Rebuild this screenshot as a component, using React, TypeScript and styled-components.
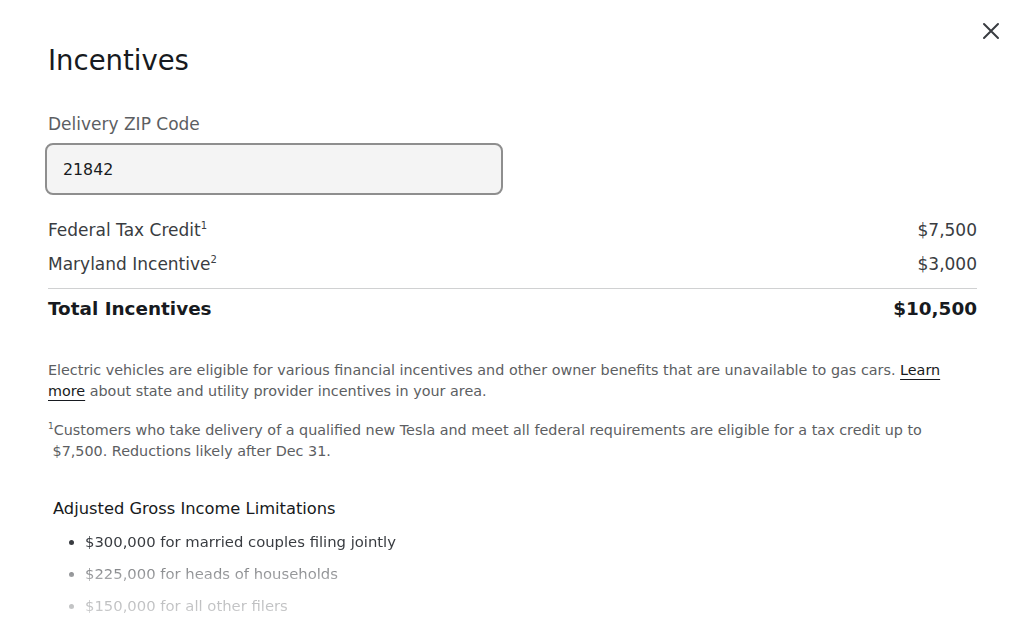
import React from 'react';
import styled, { createGlobalStyle } from 'styled-components';

const GlobalStyle = createGlobalStyle`
  html, body {
    margin: 0;
    padding: 0;
    background: #ffffff;
  }
  body {
    font-family: "DejaVu Sans", "Liberation Sans", sans-serif;
    color: #393c41;
    -webkit-font-smoothing: antialiased;
  }
`;

const Modal = styled.div`
  position: relative;
  width: 1024px;
  height: 634px;
  overflow: hidden;
  box-sizing: border-box;
  padding: 40px 47px 0 48px;
`;

const CloseButton = styled.button`
  position: absolute;
  top: 20px;
  right: 22px;
  width: 22px;
  height: 22px;
  padding: 0;
  border: none;
  background: none;
  display: flex;
  align-items: center;
  justify-content: center;
  cursor: pointer;
`;

const Title = styled.h1`
  margin: 0;
  font-size: 27.5px;
  font-weight: 400;
  color: #171a20;
  line-height: 40px;
`;

const Label = styled.label`
  display: block;
  margin-top: 34px;
  font-size: 17px;
  font-weight: 400;
  color: #5c5e62;
  line-height: 20px;
`;

const ZipInput = styled.input`
  display: block;
  box-sizing: border-box;
  margin: 9px 0 0 -3px;
  width: 458px;
  height: 52px;
  padding: 0 16px;
  border: 2px solid #8e8e8e;
  border-radius: 8px;
  background: #f4f4f4;
  font-family: inherit;
  font-size: 15.8px;
  color: #171a20;
  outline: none;
`;

const Rows = styled.div`
  margin-top: 18px;
  display: flex;
  flex-direction: column;
`;

const Row = styled.div<{ $total?: boolean }>`
  display: flex;
  justify-content: space-between;
  align-items: baseline;
  height: ${p => (p.$total ? '40px' : '34px')};
  line-height: ${p => (p.$total ? '40px' : '34px')};
  font-size: ${p => (p.$total ? '18.4px' : '17px')};
  font-weight: ${p => (p.$total ? 600 : 400)};
  color: ${p => (p.$total ? '#171a20' : '#393c41')};
  border-top: ${p => (p.$total ? '1px solid #d0d1d2' : 'none')};
  margin-top: ${p => (p.$total ? '7px' : '0')};
`;

const Sup = styled.sup`
  font-size: 10px;
  line-height: 0;
  vertical-align: 7px;
`;

const Paragraph = styled.p<{ $gap: number }>`
  margin: ${p => p.$gap}px 0 0;
  font-size: 14.35px;
  line-height: 21px;
  color: #5c5e62;
`;

const FootMark = styled.sup`
  font-size: 9px;
  line-height: 0;
  vertical-align: 6px;
`;

const TextLink = styled.a`
  color: #171a20;
  text-decoration: underline;
  text-underline-offset: 4px;
  text-decoration-thickness: 1px;
`;

const SubHeading = styled.h3`
  margin: 36px 0 0 5px;
  font-size: 16.3px;
  font-weight: 400;
  color: #171a20;
  line-height: 22px;
`;

const List = styled.ul`
  margin: 6px 0 0 5px;
  padding: 0 0 0 32px;
  list-style: disc;
  font-size: 14.8px;
  color: #393c41;
  -webkit-mask-image: linear-gradient(to bottom, #000 0%, #000 22%, rgba(0,0,0,0.45) 55%, rgba(0,0,0,0.22) 100%);
  mask-image: linear-gradient(to bottom, #000 0%, #000 22%, rgba(0,0,0,0.45) 55%, rgba(0,0,0,0.22) 100%);
`;

const Item = styled.li`
  line-height: 32px;
`;

const rows = [
  { name: 'Federal Tax Credit', note: '1', amount: '$7,500' },
  { name: 'Maryland Incentive', note: '2', amount: '$3,000' },
];

const limits = [
  '$300,000 for married couples filing jointly',
  '$225,000 for heads of households',
  '$150,000 for all other filers',
];

export default function App() {
  return (
    <>
      <GlobalStyle />
      <Modal>
        <CloseButton aria-label="Close">
          <svg width="18" height="18" viewBox="0 0 18 18" fill="none">
            <path d="M2 2L16 16M16 2L2 16" stroke="#393c41" strokeWidth="2" strokeLinecap="round" />
          </svg>
        </CloseButton>
        <Title>Incentives</Title>
        <Label htmlFor="zip">Delivery ZIP Code</Label>
        <ZipInput id="zip" defaultValue="21842" />
        <Rows>
          {rows.map(r => (
            <Row key={r.name}>
              <span>
                {r.name}
                <Sup>{r.note}</Sup>
              </span>
              <span>{r.amount}</span>
            </Row>
          ))}
          <Row $total>
            <span>Total Incentives</span>
            <span>$10,500</span>
          </Row>
        </Rows>
        <Paragraph $gap={31}>
          Electric vehicles are eligible for various financial incentives and other owner benefits that are
          unavailable to gas cars. <TextLink href="#">Learn</TextLink>
          <br />
          <TextLink href="#">more</TextLink> about state and utility provider incentives in your area.
        </Paragraph>
        <Paragraph $gap={18}>
          <FootMark>1</FootMark>Customers who take delivery of a qualified new Tesla and meet all federal
          requirements are eligible for a tax credit up to <br />&nbsp;$7,500. Reductions likely after Dec 31.
        </Paragraph>
        <SubHeading>Adjusted Gross Income Limitations</SubHeading>
        <List>
          {limits.map(l => (
            <Item key={l}>{l}</Item>
          ))}
        </List>
      </Modal>
    </>
  );
}
